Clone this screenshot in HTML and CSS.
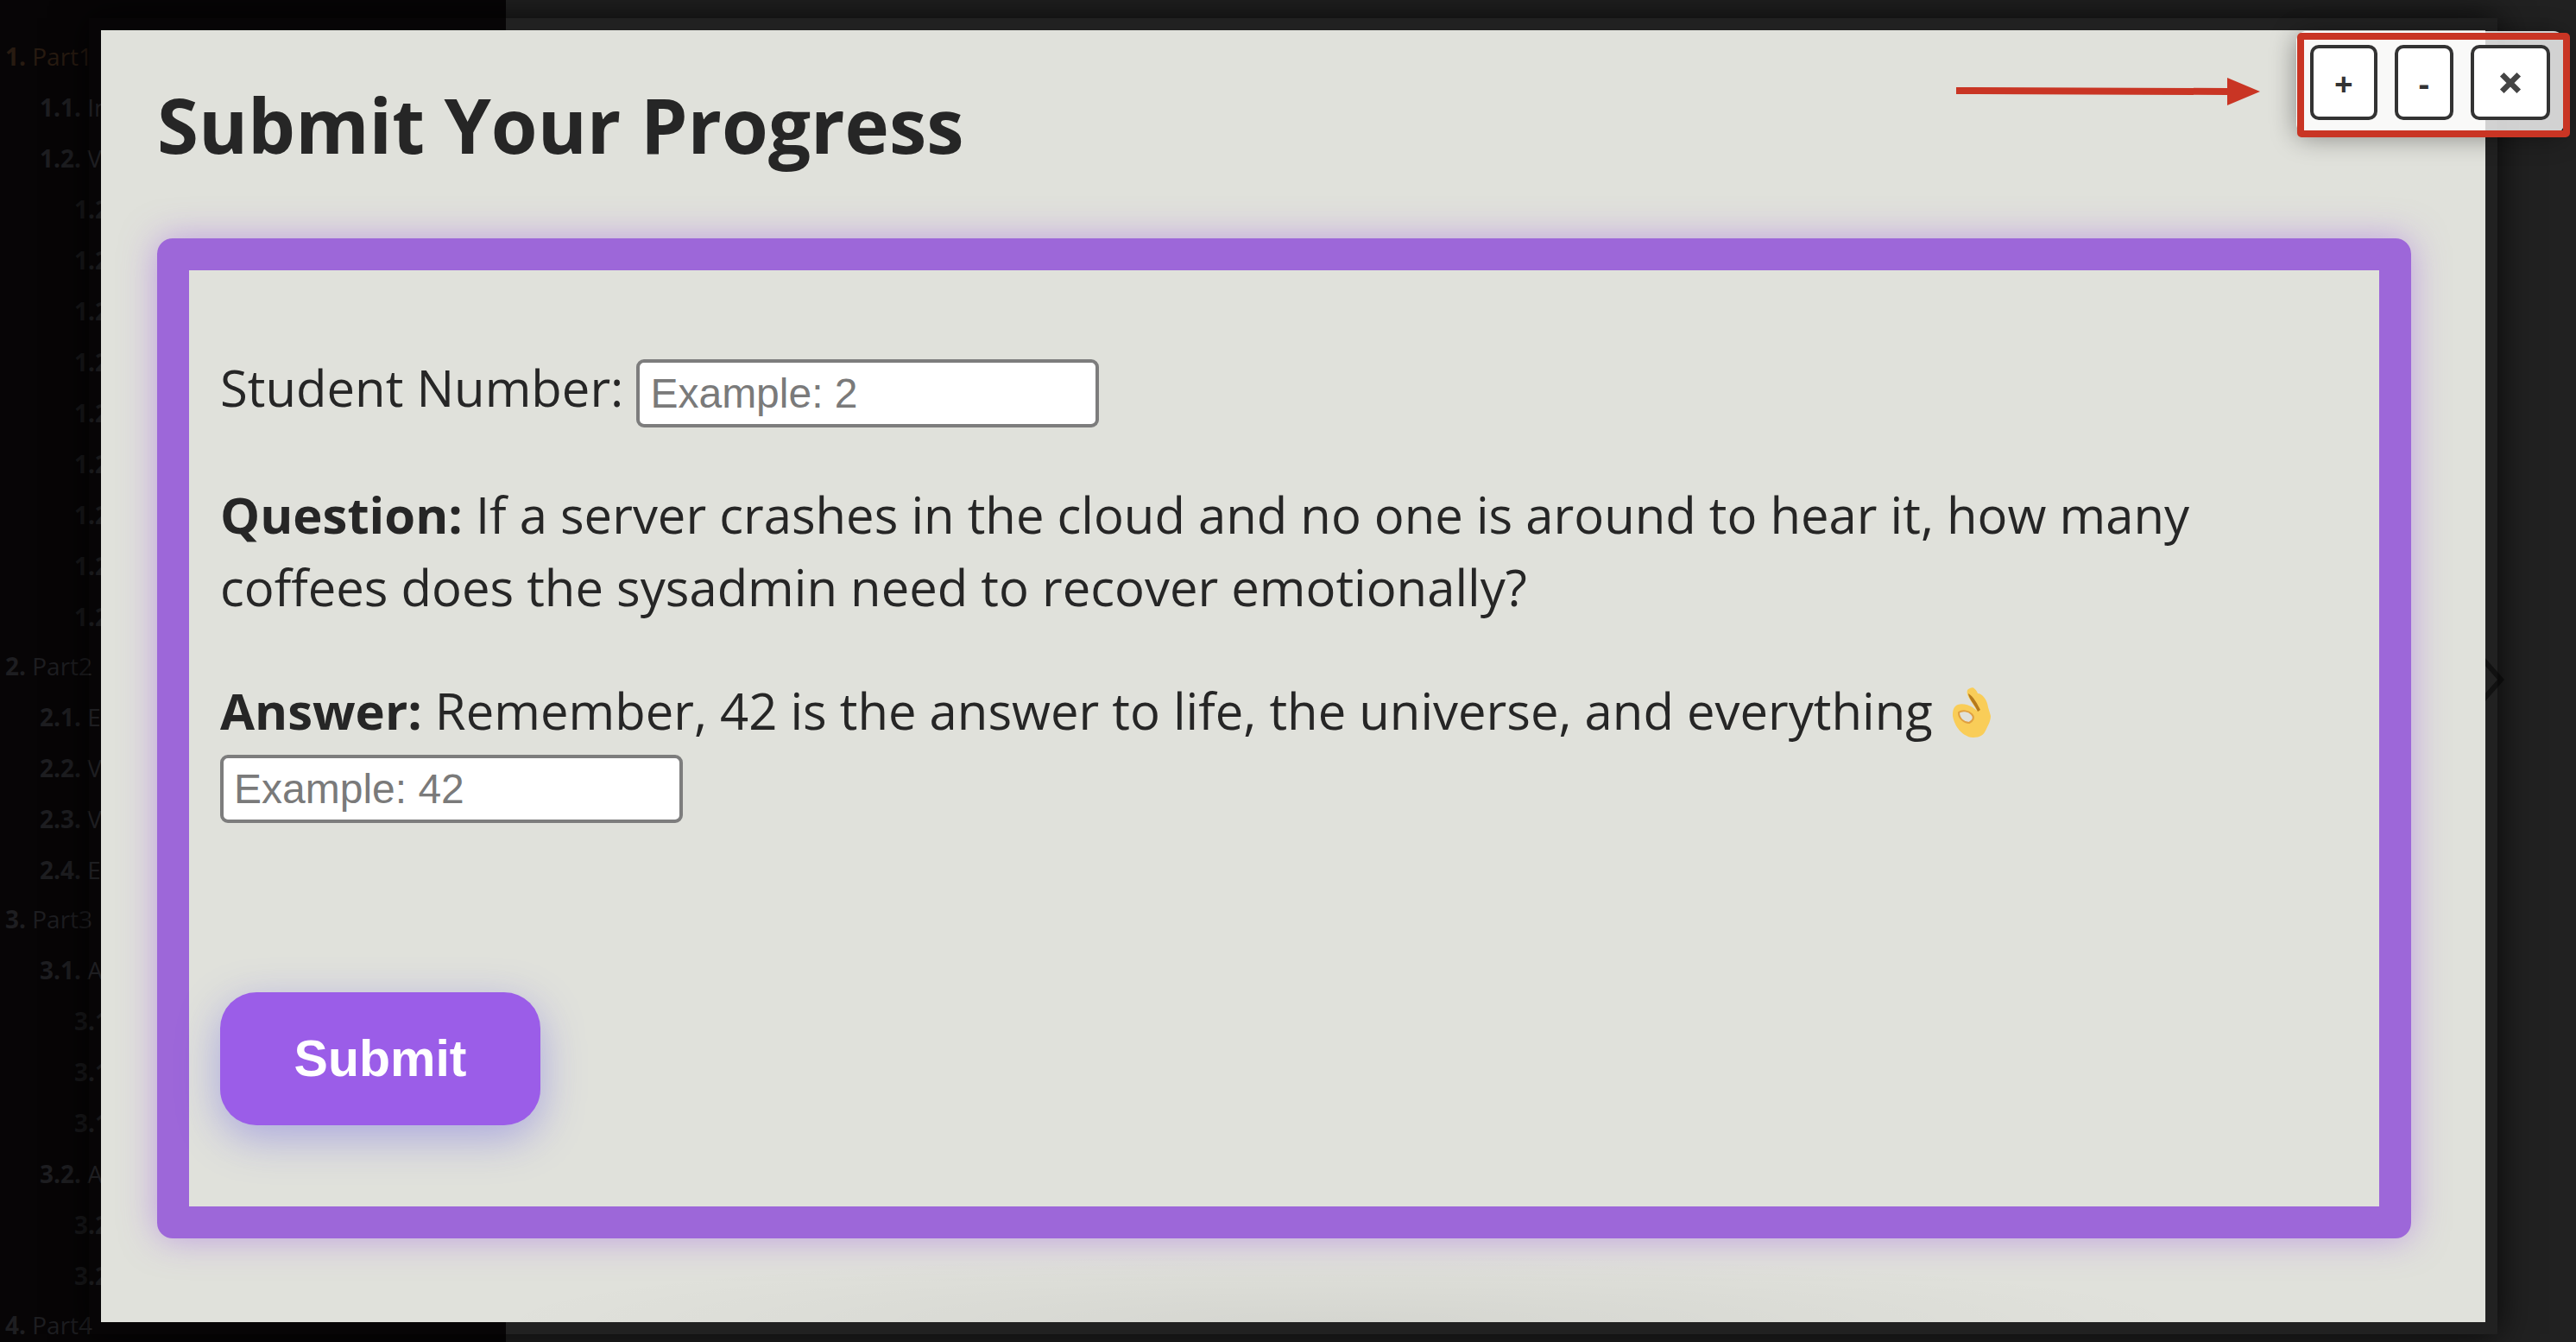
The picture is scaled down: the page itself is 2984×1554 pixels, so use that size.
FILE: index.html
```html
<!DOCTYPE html>
<html lang="en">
<head>
<meta charset="utf-8">
<title>Submit Your Progress</title>
<link rel="stylesheet" href="styles.css">
</head>
<body>
<div class="book">
  <nav class="sidebar" aria-label="Chapters">
    <ol class="toc">
      <li class="group active"><a href="#"><b>1.</b> Part1</a></li>
      <li><ol class="sections">
        <li><a href="#"><b>1.1.</b> In</a></li>
        <li><a href="#"><b>1.2.</b> V</a></li>
        <li><ol class="topics">
          <li><a href="#"><b>1.2</b></a></li>
          <li><a href="#"><b>1.2</b></a></li>
          <li><a href="#"><b>1.2</b></a></li>
          <li><a href="#"><b>1.2</b></a></li>
          <li><a href="#"><b>1.2</b></a></li>
          <li><a href="#"><b>1.2</b></a></li>
          <li><a href="#"><b>1.2</b></a></li>
          <li><a href="#"><b>1.2</b></a></li>
          <li><a href="#"><b>1.2</b></a></li>
        </ol></li>
      </ol></li>
      <li class="group"><a href="#"><b>2.</b> Part2</a></li>
      <li><ol class="sections">
        <li><a href="#"><b>2.1.</b> E</a></li>
        <li><a href="#"><b>2.2.</b> V</a></li>
        <li><a href="#"><b>2.3.</b> V</a></li>
        <li><a href="#"><b>2.4.</b> E</a></li>
      </ol></li>
      <li class="group"><a href="#"><b>3.</b> Part3</a></li>
      <li><ol class="sections">
        <li><a href="#"><b>3.1.</b> A</a></li>
        <li><ol class="topics">
          <li><a href="#"><b>3.1</b></a></li>
          <li><a href="#"><b>3.1</b></a></li>
          <li><a href="#"><b>3.1</b></a></li>
        </ol></li>
        <li><a href="#"><b>3.2.</b> A</a></li>
        <li><ol class="topics">
          <li><a href="#"><b>3.2</b></a></li>
          <li><a href="#"><b>3.2</b></a></li>
        </ol></li>
      </ol></li>
      <li class="group"><a href="#"><b>4.</b> Part4</a></li>
    </ol>
  </nav>
  <main class="page">
    <svg class="next" viewBox="0 0 32 60" aria-hidden="true"><path d="M4 4L27 30L4 56"/></svg>
  </main>
</div>

<div class="overlay">
  <div class="frame">
    <section class="modal">
      <h1>Submit Your Progress</h1>
      <form class="card">
        <p><label for="student">Student Number:</label> <input id="student" type="text" placeholder="Example: 2"></p>
        <p><strong>Question:</strong> If a server crashes in the cloud and no one is around to hear it, how many coffees does the sysadmin need to recover emotionally?</p>
        <p><label for="answer"><strong>Answer:</strong> Remember, 42 is the answer to life, the universe, and everything <svg class="ok" viewBox="0 0 48 60" role="img" aria-label="OK hand"><path class="skin" d="M22 2C26 0 29 3 31 8C36 8 42 15 43 24L46 34C46 40 43 45 41 49C38 57 33 59 25 59C13 58 4 46 2 34C2 27 3 23 8 21C13 19 20 21 25 24L30 28C26 20 21 15 19 9C18 5 19 3 22 2Z"/><path class="shade" d="M20 8C25 11 29 17 34 27L31 29C27 20 21 15 20 8Z"/><path class="hole" d="M9 30C13 27 20 28 24 32C28 36 25 40 21 42C15 42 9 37 9 30Z"/></svg></label><br><input id="answer" type="text" placeholder="Example: 42"></p>
        <button class="submit" type="button">Submit</button>
      </form>
    </section>
  </div>
</div>

<svg class="arrow" viewBox="0 0 352 34" aria-hidden="true"><path d="M0 12L314 13V1L352 17L314 33V21L0 20Z"/></svg>
<div class="controls">
  <button type="button">+</button>
  <button type="button">-</button>
  <button type="button" aria-label="Close"><svg class="cross" viewBox="0 0 24 24" aria-hidden="true"><path d="M3 3L21 21M21 3L3 21"/></svg></button>
</div>
</body>
</html>
```
FILE: styles.css
```css
* { box-sizing: border-box; }
body {
  margin: 0;
  height: 100vh;
  overflow: hidden;
  background: #212121;
  color: #262626;
  font-family: "Open Sans", sans-serif;
}
.book { display: flex; height: 100vh; }
.sidebar {
  width: 586px;
  padding: 36px 6px;
  background: #070506;
  font-size: 28px;
  line-height: 59px;
  overflow: hidden;
}
.sidebar ol { margin: 0; padding: 0; list-style: none; }
.sidebar .sections, .sidebar .topics { padding-left: 40px; }
.sidebar .group:not(.active) { margin-top: -2px; }
.sidebar a { color: #1e1e21; text-decoration: none; white-space: nowrap; }
.sidebar .topics a { color: #19191b; }
.sidebar .active a { color: #281b11; }
.page { flex: 1; display: flex; align-items: center; justify-content: flex-end; padding-top: 20px; }
.next { width: 32px; height: 60px; margin-right: 82px; fill: none; stroke: #111; stroke-width: 6; }

.overlay { position: absolute; inset: 0; padding: 21px 91px 9px 103px; }
.frame { height: 100%; padding: 14px; box-shadow: 0 0 40px rgba(0, 0, 0, .8); }
.modal {
  height: 100%;
  padding: 54px 86px 0 65px;
  background: radial-gradient(36% 80px at 52% 100%, rgba(0, 0, 0, .05), rgba(0, 0, 0, 0)) #e0e1db;
}
h1 { margin: 0 0 77px; font-size: 87px; line-height: 110px; }
.card {
  padding: 94px 36px;
  border: 37px solid #9d67d9;
  border-radius: 18px;
  box-shadow: 0 0 40px rgba(157, 90, 230, .5);
  font-size: 58px;
  line-height: 84px;
}
.card p { margin: 0 0 59px; }
.card input {
  width: 536px;
  height: 79px;
  padding: 0 12px;
  border: 4px solid #7d7d7d;
  border-radius: 9px;
  background: #fff;
  font: 48px "Liberation Sans", sans-serif;
  vertical-align: middle;
}
.card input::placeholder { color: #7a7a7a; opacity: 1; }
.ok { width: 48px; height: 60px; margin-left: 6px; vertical-align: -10px; }
.ok .skin { fill: #f9cd58; }
.ok .shade { fill: #b5791c; }
.ok .hole { fill: #e0e1db; stroke: #e0a040; stroke-width: 2; }
.submit {
  display: block;
  margin-top: 196px;
  width: 371px;
  height: 154px;
  border: 0;
  border-radius: 42px;
  background: #9b5de8;
  box-shadow: 0 14px 50px rgba(90, 80, 230, .4);
  color: #fff;
  font: bold 59px "Liberation Sans", sans-serif;
}

.arrow { position: absolute; top: 89px; right: 366px; width: 352px; height: 34px; fill: #c93524; }
.controls {
  position: absolute;
  top: 36px;
  right: 14px;
  display: flex;
  gap: 20px;
  padding: 16px;
  border-radius: 12px;
  background: rgba(255, 255, 255, .8);
  box-shadow: 0 4px 30px rgba(0, 0, 0, .4);
}
/* Red highlight drawn over the edge of the button panel */
.controls::after {
  content: "";
  position: absolute;
  inset: 2px -7px -4px 1px;
  border: 8px solid #c93524;
  border-radius: 5px;
  pointer-events: none;
}
.controls button {
  height: 87px;
  padding: 0 24px;
  border: 4px solid #333;
  border-radius: 10px;
  background: #fff;
  color: #333;
  font: bold 38px "Open Sans", sans-serif;
}
.cross { display: block; width: 36px; height: 26px; fill: none; stroke: #444; stroke-width: 6; }
```
